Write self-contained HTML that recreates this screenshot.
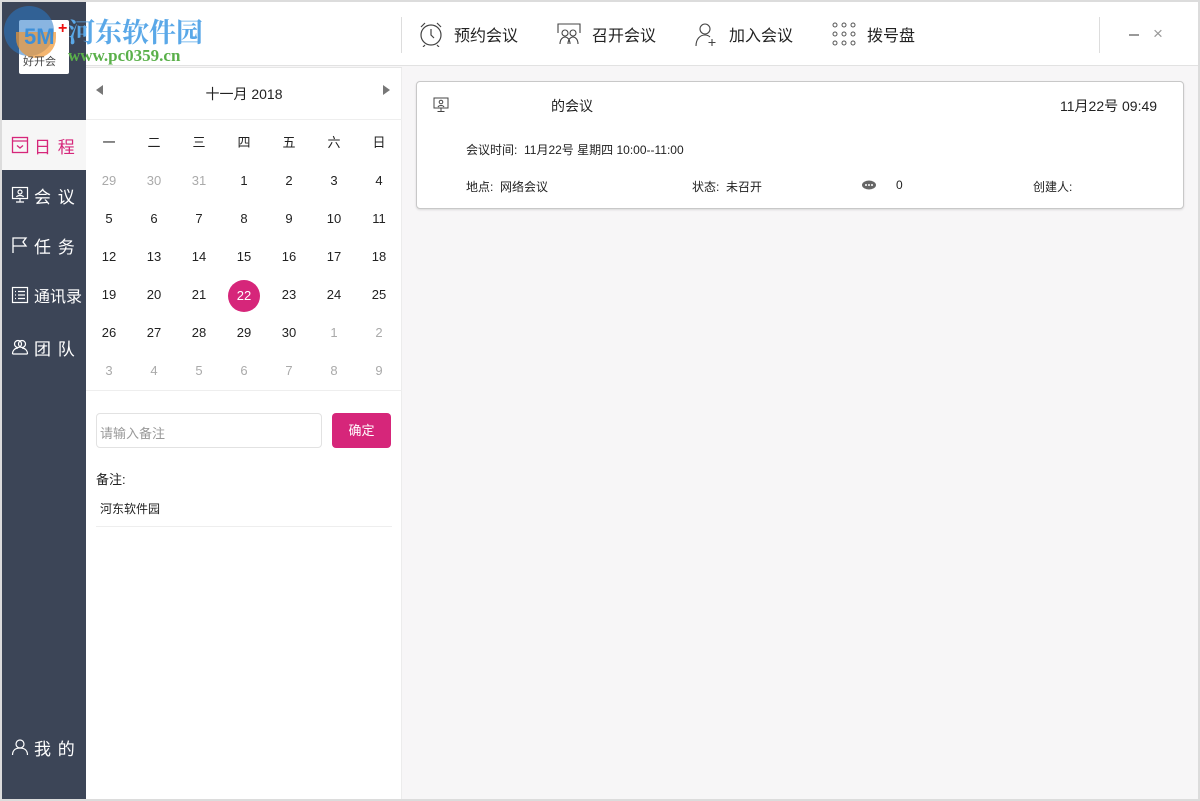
<!DOCTYPE html>
<html><head><meta charset="utf-8"><style>
*{margin:0;padding:0;box-sizing:border-box}
body{width:1200px;height:801px;overflow:hidden;background:#dcdcdc;font-family:"Liberation Sans","Noto Sans CJK SC",sans-serif;position:relative}
.abs{position:absolute}
#frame{left:2px;top:2px;width:1196px;height:797px;background:#f7f6f7;overflow:hidden}
#side{left:0;top:0;width:84px;height:797px;background:#3c4557}
#top{left:84px;top:0;width:1112px;height:64px;background:#fff;border-bottom:1px solid #e2e2e2}
#mid{left:84px;top:65px;width:316px;height:732px;background:#fff;border-right:1px solid #ececec}
.nav{position:absolute;left:0;width:84px;height:50px;color:#fff;font-size:17px;display:flex;align-items:center;padding-left:9px;letter-spacing:1px}
.nav svg{margin-right:5px}
.cal{position:absolute;font-size:13px;color:#222;width:30px;text-align:center;transform:translateX(-15px)}
.g{color:#aaa}
.tb{position:absolute;top:0;height:64px;display:flex;align-items:center;font-size:16px;color:#222}
.tb svg{margin-right:10px}
.card{left:414px;top:79px;width:768px;height:128px;background:#fff;border:1px solid #c8c8c8;border-radius:4px;box-shadow:0 1px 2px rgba(0,0,0,.12)}
.t{position:absolute;font-size:13px;color:#222;white-space:nowrap}
</style></head><body>
<div id="frame" class="abs">
<div id="side" class="abs">
 <div class="abs" style="left:17px;top:18px;width:50px;height:54px;background:#fff;border-radius:2px"></div>
 <div class="abs" style="left:2px;top:4px;width:50px;height:50px;border-radius:50%;background:rgba(40,120,200,.55)"></div>
 <div class="abs" style="left:14px;top:30px;width:40px;height:26px;border-radius:0 0 20px 20px;background:rgba(240,150,50,.7)"></div>
 <div class="abs" style="left:22px;top:22px;color:#3d8fd8;font-weight:bold;font-size:22px">5M</div>
 <div class="abs" style="left:56px;top:18px;color:#e11;font-weight:bold;font-size:16px">+</div>
 <div class="abs" style="left:21px;top:51px;color:#444;font-size:11px">好开会</div>
 <div class="nav" style="top:118px;background:#f6f6f6;color:#d6267a"><svg width="18" height="18" viewBox="0 0 18 18" fill="none" stroke="#d6267a" stroke-width="1.3"><rect x="1.5" y="1.5" width="15" height="15"/><path d="M1.5 5h15M6 9.5l3 2.5 3-2.5"/></svg>日 程</div>
 <div class="nav" style="top:168px"><svg width="18" height="18" viewBox="0 0 18 18" fill="none" stroke="#fff" stroke-width="1.2"><rect x="1.5" y="1.5" width="15" height="11"/><circle cx="9" cy="6" r="2"/><path d="M5.5 11c1-2 6-2 7 0M9 12.5v3M5 16h8"/></svg>会 议</div>
 <div class="nav" style="top:218px"><svg width="18" height="18" viewBox="0 0 18 18" fill="none" stroke="#fff" stroke-width="1.3"><path d="M2 17V2h13l-3 4 3 4H2"/></svg>任 务</div>
 <div class="nav" style="top:268px;font-size:16px;letter-spacing:0"><svg width="18" height="18" viewBox="0 0 18 18" fill="none" stroke="#fff" stroke-width="1.2"><rect x="1.5" y="1.5" width="15" height="15"/><path d="M4 5.5h1M7 5.5h7M4 9h1M7 9h7M4 12.5h1M7 12.5h7"/></svg>通讯录</div>
 <div class="nav" style="top:320px"><svg width="18" height="18" viewBox="0 0 18 18" fill="none" stroke="#fff" stroke-width="1.2"><circle cx="7" cy="6" r="3.5"/><circle cx="11" cy="6" r="3.5"/><path d="M1.5 16c0-4 3-6 5.5-6M16.5 16c0-4-3-6-5.5-6M1.5 16h15"/></svg>团 队</div>
 <div class="nav" style="top:720px"><svg width="18" height="18" viewBox="0 0 18 18" fill="none" stroke="#fff" stroke-width="1.2"><circle cx="9" cy="6" r="4"/><path d="M1.5 17c0-5 3.5-7 7.5-7s7.5 2 7.5 7"/></svg>我 的</div>
</div>
<div id="top" class="abs">
 <div class="abs" style="left:315px;top:15px;width:1px;height:36px;background:#ddd"></div>
 <div class="abs" style="left:1013px;top:15px;width:1px;height:36px;background:#ddd"></div>
 <div class="tb" style="left:332px"><svg width="26" height="26" viewBox="0 0 26 26" fill="none" stroke="#444" stroke-width="1.2"><circle cx="13" cy="14" r="10"/><path d="M13 8v6l3 3M3 6l4-4M23 6l-4-4M7 24l-2 2M19 24l2 2"/></svg>预约会议</div>
 <div class="tb" style="left:470px"><svg width="26" height="26" viewBox="0 0 26 26" fill="none" stroke="#444" stroke-width="1.1"><path d="M2 12V3h22v9"/><circle cx="9" cy="12" r="3"/><circle cx="17" cy="12" r="3"/><path d="M4 23c0-5 3-7 5-7s5 2 5 7M12 23c0-5 3-7 5-7s5 2 5 7"/></svg>召开会议</div>
 <div class="tb" style="left:607px"><svg width="26" height="26" viewBox="0 0 26 26" fill="none" stroke="#444" stroke-width="1.1"><circle cx="12" cy="8" r="5"/><path d="M3 25c0-7 4-11 9-11 2 0 4 1 5 2M19 18v7M15.5 21.5h7"/></svg>加入会议</div>
 <div class="tb" style="left:745px"><svg width="26" height="26" viewBox="0 0 26 26" fill="none" stroke="#555" stroke-width="1"><circle cx="4" cy="4" r="2"/><circle cx="13" cy="4" r="2"/><circle cx="22" cy="4" r="2"/><circle cx="4" cy="13" r="2"/><circle cx="13" cy="13" r="2"/><circle cx="22" cy="13" r="2"/><circle cx="4" cy="22" r="2"/><circle cx="13" cy="22" r="2"/><circle cx="22" cy="22" r="2"/></svg>拨号盘</div>
 <div class="abs" style="left:1043px;top:32px;width:10px;height:1.5px;background:#999"></div>
 <div class="abs" style="left:1067px;top:22px;color:#999;font-size:17px">×</div>
</div>
<div class="abs" style="left:66px;top:9px;font-family:'Liberation Serif','Noto Serif CJK SC',serif;font-weight:bold;font-size:27px;color:#5aa8e8;letter-spacing:0">河东软件园</div>
<div class="abs" style="left:66px;top:44px;font-family:'Liberation Serif',serif;font-weight:bold;font-size:17px;color:#5ab04a">www.pc0359.cn</div>
<div id="mid" class="abs">
 <div class="abs" style="left:0;top:0;width:316px;height:1px;background:#e6e6e6"></div>
 <svg class="abs" style="left:10px;top:18px" width="8" height="10"><path d="M7 0L0 5l7 5z" fill="#777"/></svg>
 <svg class="abs" style="left:296px;top:18px" width="8" height="10"><path d="M1 0l7 5-7 5z" fill="#777"/></svg>
 <div class="abs" style="left:0;top:17px;width:316px;text-align:center;font-size:14px;color:#222">十一月 2018</div>
 <div class="abs" style="left:0;top:52px;width:316px;height:1px;background:#eee"></div>
 <div class="abs" style="left:0;top:323px;width:316px;height:1px;background:#eee"></div>
 <div id="cal"></div>
 <div class="abs" style="left:10px;top:346px;width:226px;height:35px;border:1px solid #e2e2e2;border-radius:4px;font-size:13px;color:#999;padding:9px 3px">请输入备注</div>
 <div class="abs" style="left:246px;top:346px;width:59px;height:35px;background:#d6267a;border-radius:4px;color:#fff;font-size:13px;text-align:center;line-height:35px">确定</div>
 <div class="t" style="left:10px;top:402px;font-size:13px">备注:</div>
 <div class="t" style="left:14px;top:433px;font-size:12px">河东软件园</div>
 <div class="abs" style="left:10px;top:459px;width:296px;height:1px;background:#eee"></div>
</div>
<div class="card abs">
 <svg class="abs" style="left:16px;top:15px" width="16" height="16" viewBox="0 0 16 16" fill="none" stroke="#444" stroke-width="1"><rect x="1" y="1" width="14" height="10"/><circle cx="8" cy="5" r="1.8"/><path d="M5 10c1-2 5-2 6 0M8 11v3M4.5 14.5h7"/></svg>
 <div class="t" style="left:134px;top:14px;font-size:14px">的会议</div>
 <div class="t" style="left:643px;top:14px;font-size:14px">11月22号 09:49</div>
 <div class="t" style="left:49px;top:59px;font-size:12px">会议时间:&nbsp; 11月22号 星期四 10:00--11:00</div>
 <div class="t" style="left:49px;top:96px;font-size:12px">地点:&nbsp; 网络会议</div>
 <div class="t" style="left:275px;top:96px;font-size:12px">状态:&nbsp; 未召开</div>
 <svg class="abs" style="left:445px;top:98px" width="14" height="10"><ellipse cx="7" cy="5" rx="7" ry="4.5" fill="#666"/><circle cx="4" cy="5" r="1" fill="#fff"/><circle cx="7" cy="5" r="1" fill="#fff"/><circle cx="10" cy="5" r="1" fill="#fff"/></svg>
 <div class="t" style="left:479px;top:96px;font-size:12px">0</div>
 <div class="t" style="left:616px;top:96px;font-size:12px">创建人:</div>
</div>
</div>
<script>
var c=document.getElementById('cal'),h='';
var xs=[23,68,113,158,203,248,293];
['一','二','三','四','五','六','日'].forEach(function(d,i){h+='<div class="cal" style="left:'+xs[i]+'px;top:65px">'+d+'</div>';});
var days=[[29,30,31,1,2,3,4],[5,6,7,8,9,10,11],[12,13,14,15,16,17,18],[19,20,21,22,23,24,25],[26,27,28,29,30,1,2],[3,4,5,6,7,8,9]];
days.forEach(function(r,ri){r.forEach(function(d,i){var g=(ri==0&&i<3)||(ri==4&&i>4)||ri==5;var y=106+ri*38;
if(ri==3&&i==3){h+='<div class="abs" style="left:'+(xs[i]-16)+'px;top:'+(y-7)+'px;width:32px;height:32px;border-radius:50%;background:#d6267a;color:#fff;font-size:13px;text-align:center;line-height:32px">22</div>';}
else h+='<div class="cal'+(g?' g':'')+'" style="left:'+xs[i]+'px;top:'+y+'px">'+d+'</div>';});});
c.innerHTML=h;
</script>
</body></html>
